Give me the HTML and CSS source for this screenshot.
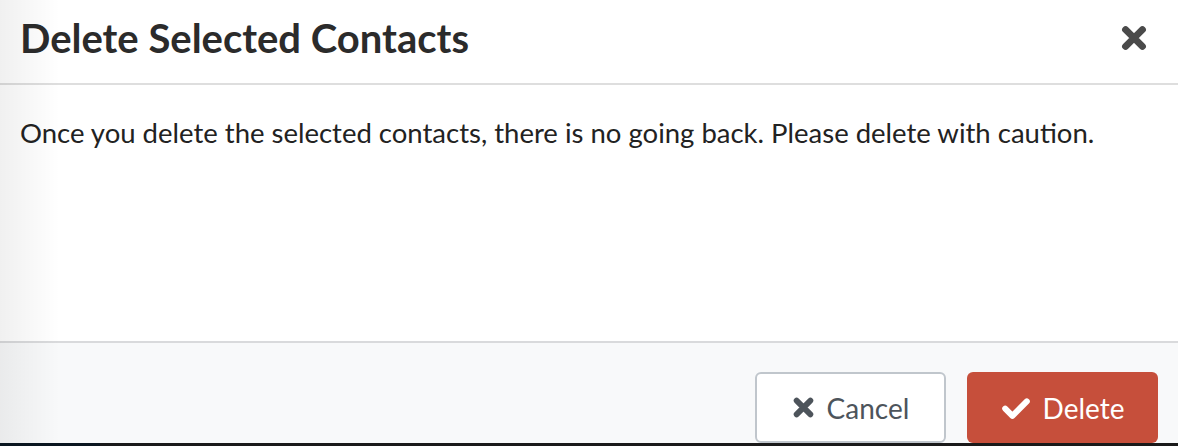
FILE: index.html
```html
<!DOCTYPE html>
<html lang="en">
<head>
    <meta charset="UTF-8">
    <meta name="viewport" content="width=device-width, initial-scale=1.0">
    <title>Delete Selected Contacts</title>
    <link rel="stylesheet" href="styles.css">
</head>
<body>
    <div class="modal">
        <div class="modal-header">
            <h2 class="modal-title">Delete Selected Contacts</h2>
            <button type="button" class="close-btn" aria-label="Close">
                <svg viewBox="0 0 20 20" width="28" height="28">
                    <path d="M4 4 L16 16 M16 4 L4 16" stroke="currentColor" stroke-width="5" stroke-linecap="round"/>
                </svg>
            </button>
        </div>

        <div class="modal-body">
            <p>Once you delete the selected contacts, there is no going back. Please delete with caution.</p>
        </div>

        <div class="modal-footer">
            <button type="button" class="btn btn-cancel">
                <svg viewBox="0 0 20 20" width="23" height="23">
                    <path d="M4 4 L16 16 M16 4 L4 16" stroke="currentColor" stroke-width="5" stroke-linecap="round"/>
                </svg>
                Cancel
            </button>
            <button type="button" class="btn btn-delete">
                <svg viewBox="0 0 24 20" width="30" height="24">
                    <path d="M3 10.5 L9 16.5 L21 4.5" fill="none" stroke="currentColor" stroke-width="5" stroke-linecap="round" stroke-linejoin="round"/>
                </svg>
                Delete
            </button>
        </div>
    </div>
    <div class="backdrop-strip"></div>
</body>
</html>
```

FILE: styles.css
```css
body {
    margin: 0;
    font-family: Lato, "Open Sans", sans-serif;
    background-color: #141414;
    height: 446px;
    overflow: hidden;
}

.modal {
    background-color: #fff;
    height: 443px;
    display: flex;
    flex-direction: column;
    position: relative;
}

/* soft shadow along the left edge */
.modal::before {
    content: "";
    position: absolute;
    top: 0;
    left: 0;
    bottom: 0;
    width: 60px;
    background: linear-gradient(to right, rgba(0, 0, 0, 0.06), rgba(0, 0, 0, 0));
    pointer-events: none;
}

.modal-header {
    height: 85px;
    box-sizing: border-box;
    border-bottom: 2px solid #dedede;
    display: flex;
    align-items: center;
    justify-content: space-between;
    padding: 0 30px 8px 20px;
}

.modal-title {
    margin: 0;
    font-size: 40px;
    font-weight: 700;
    color: #2b2b2b;
}

.close-btn {
    background: none;
    border: none;
    padding: 0;
    color: #4a4a4a;
    display: flex;
}

.modal-body {
    flex: 1;
    padding: 0 20px;
}

.modal-body p {
    margin: 31px 0 0;
    font-size: 27.5px;
    color: #222;
}

.modal-footer {
    height: 100px;
    border-top: 2px solid #d9dadc;
    background-color: #f8f9fa;
    display: flex;
    justify-content: flex-end;
    align-items: flex-end;
    gap: 21px;
    padding: 0 20px 0 0;
}

.btn {
    height: 71px;
    width: 191px;
    border-radius: 6px;
    font-family: inherit;
    font-size: 28px;
    display: flex;
    align-items: center;
    justify-content: center;
    gap: 12px;
}

.btn-cancel {
    background-color: #fff;
    border: 2px solid #c0c6cc;
    color: #4d545b;
}

.btn-delete {
    background-color: #c64f3b;
    border: none;
    color: #fff;
}

.backdrop-strip {
    height: 3px;
    background: linear-gradient(to right, #0a1620 100px, #1a1a1a 100px);
}
```
